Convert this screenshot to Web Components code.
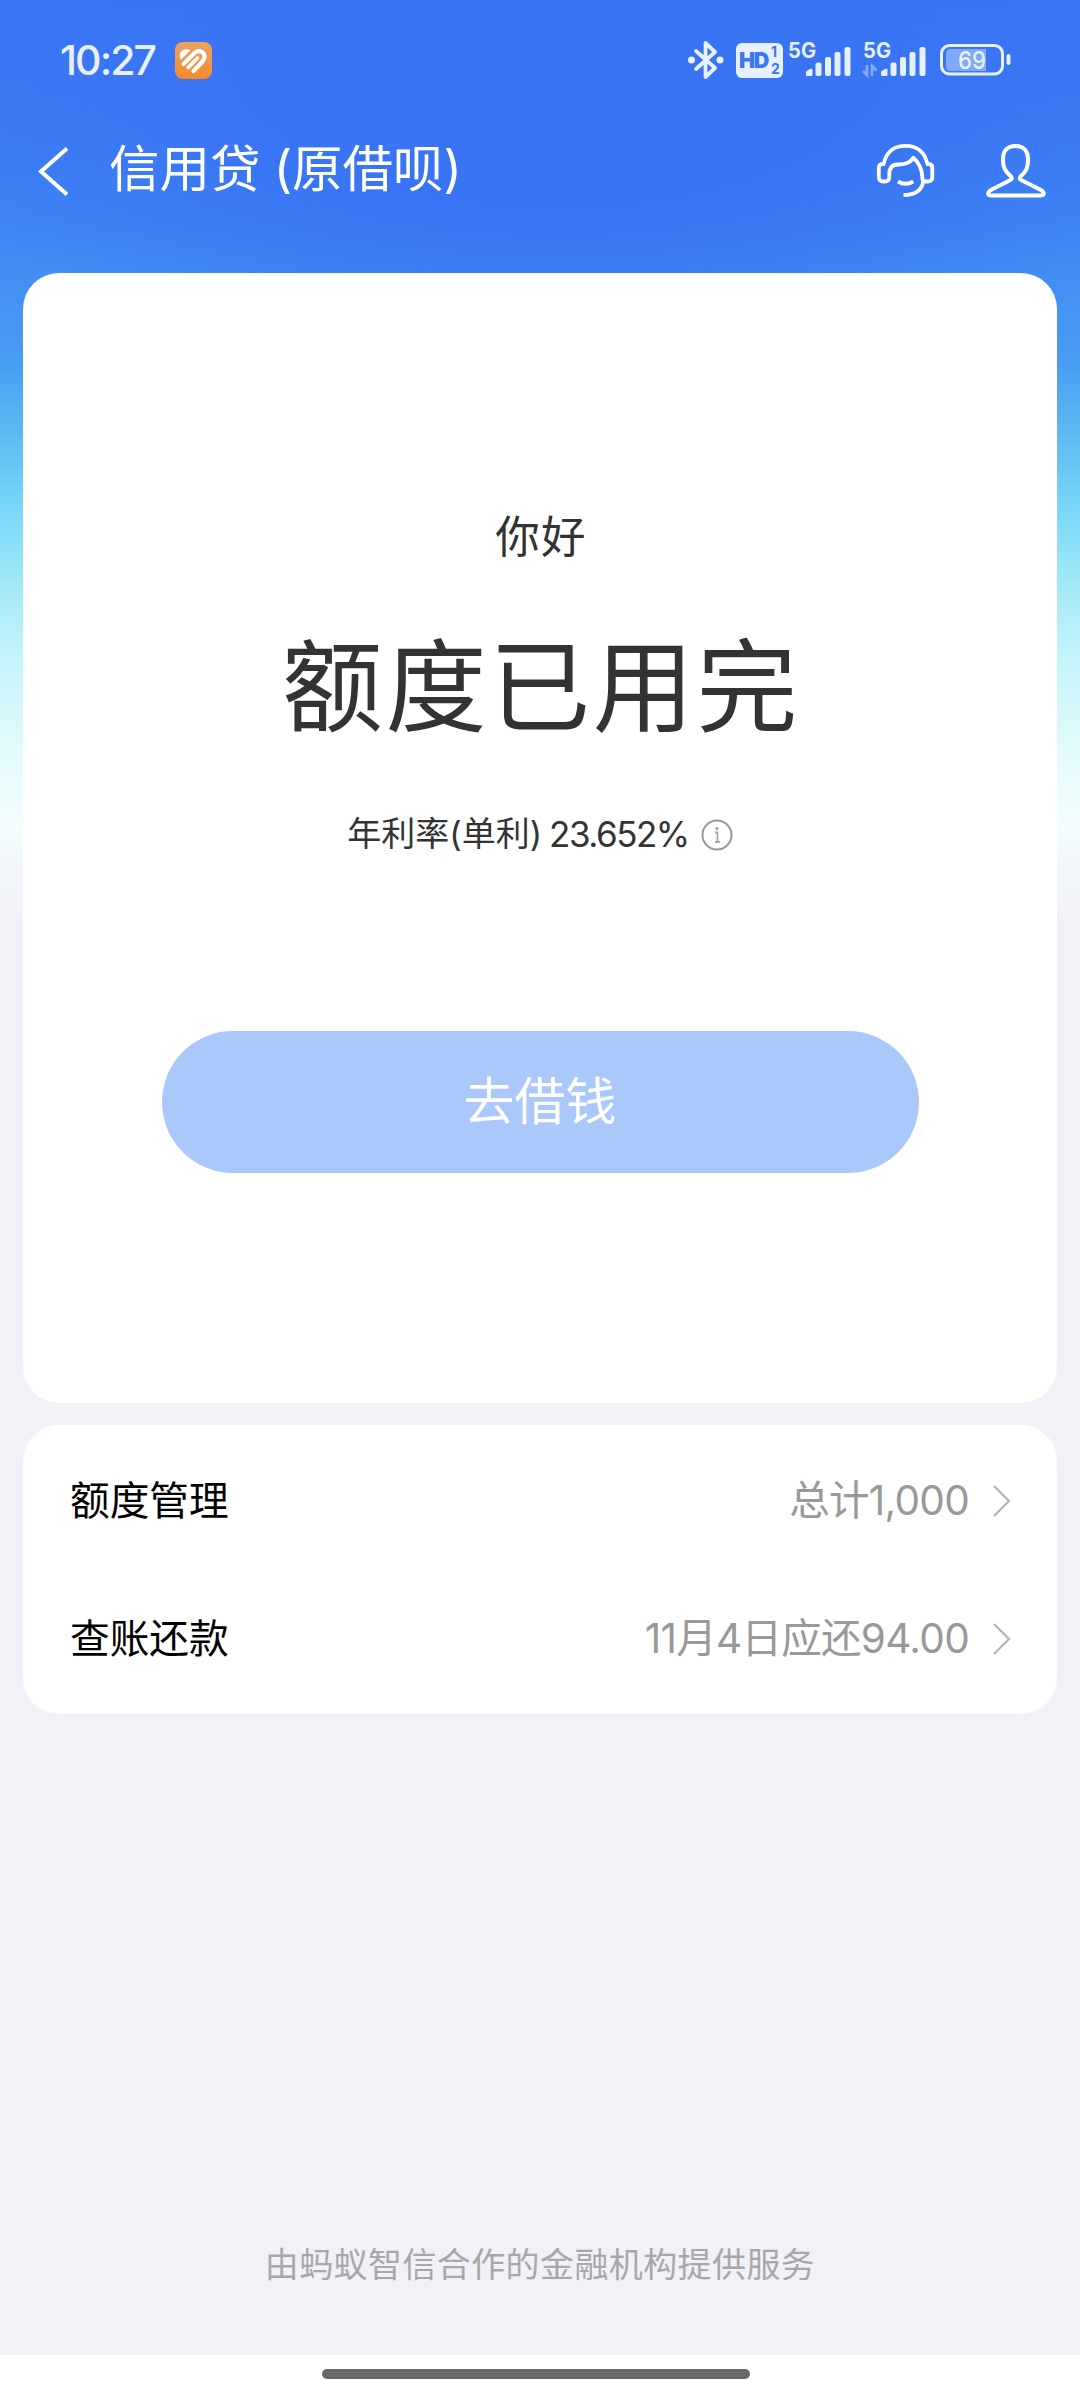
<!DOCTYPE html>
<html lang="zh-CN">
<head>
<meta charset="utf-8">
<title>信用贷</title>
<style>
html,body{margin:0;padding:0}
body{width:1080px;height:2400px;overflow:hidden;background:#f1f2f7;font-family:Inter,"Noto Sans CJK SC",sans-serif}
</style>
</head>
<body>
<loan-page></loan-page>
<script>
const define = (name, html) => {
  const t = document.createElement('template');
  t.innerHTML = html;
  customElements.define(name, class extends HTMLElement {
    constructor() {
      super();
      this.attachShadow({ mode: 'open' }).appendChild(t.content.cloneNode(true));
    }
  });
};

define('app-badge', `<style>:host{display:block;width:37px;height:37px}svg{display:block}</style>
<svg width="37" height="37" viewBox="0 0 37 37"><defs><linearGradient id="g" x1="0" y1="0" x2="0" y2="1"><stop offset="0" stop-color="#e9a362"/><stop offset="1" stop-color="#f58a2c"/></linearGradient></defs>
<rect width="37" height="37" rx="8" fill="url(#g)"/>
<path d="M5.500 17C2.500 9.500 9 5.500 15 8L15.500 8.300L6 17.800Z" fill="#fff"/>
<g fill="none" stroke="#fff" stroke-width="4.200" stroke-linecap="round"><path d="M8.500 22L19.500 11C24 7 30 10 29.500 15.500C29.300 18 27 20.500 18.500 29"/><path d="M13.200 25.500L22.500 16" stroke-width="3.800"/></g></svg>`);

define('bluetooth-icon', `<style>:host{display:block}svg{display:block}</style>
<svg width="36" height="40" viewBox="0 0 36 40" fill="none" stroke="#e6f0fe" stroke-width="3.800" stroke-linejoin="round" stroke-linecap="round"><path d="M8 11L27 28L17.500 37V3L27 12L8 29"/><g fill="#e6f0fe" stroke="none"><circle cx="3.500" cy="20" r="3.500"/><circle cx="32" cy="20" r="3.500"/></g></svg>`);

define('hd-icon', `<style>:host{display:flex;box-sizing:border-box;width:47px;height:35px;border-radius:6px;background:#e6f0fe;color:#3b77f4;align-items:center;padding-left:3px;font-weight:700}
b{font-size:21.500px;line-height:35px;letter-spacing:-1.500px;width:30px}span{display:flex;flex-direction:column;font-size:14px;line-height:17px;margin-left:2px}i{font-style:normal}</style><b>HD</b><span><i>1</i><i>2</i></span>`);

define('signal-icon', `<style>:host{display:block}svg{display:block}text{font:700 21px Inter,sans-serif;fill:#e6f0fe}.a{display:none}:host([data]) .a{display:block}</style>
<svg width="65" height="48" viewBox="0 -6 65 48"><text x="1" y="16" textLength="28" lengthAdjust="spacingAndGlyphs">5G</text>
<g fill="#e6f0fe"><path d="M19 33V30Q19 28.500 24.500 26.500Q25.500 26.500 25.500 28V33Q25.500 34 24.500 34H20Q19 34 19 33Z"/><rect x="28.500" y="20.500" width="6" height="13.500" rx="2"/><rect x="38" y="15" width="6" height="19" rx="2"/><rect x="47.500" y="10" width="6" height="24" rx="2"/><rect x="57.500" y="5" width="6" height="29" rx="2"/></g>
<g class="a" fill="none" stroke="#85acf8" stroke-width="2.600"><path d="M1 29L5 33V23M10 34V24L14.500 28.500"/></g></svg>`);

define('battery-icon', `<style>:host{display:block}svg{display:block}text{font:500 24.500px Inter,sans-serif;fill:#e6f0fe}</style>
<svg width="72" height="32" viewBox="0 0 72 32"><rect x="1.500" y="1.500" width="61" height="28.500" rx="8" fill="none" stroke="#e6f0fe" stroke-width="3"/><path d="M10 5H46V27H10Q6 27 6 22V10Q6 5 10 5Z" fill="#82a9f8"/><rect x="66.500" y="10" width="4" height="11" rx="2" fill="#e6f0fe"/><text x="18" y="24.700" textLength="28" lengthAdjust="spacingAndGlyphs">69</text></svg>`);

define('status-bar', `<style>
:host{display:flex;height:120px;box-sizing:border-box;align-items:center;padding:0 68px 0 60px;color:#e6f0fe}
time{font-size:41px;font-weight:500;line-height:48px;width:115px;letter-spacing:-1.900px}
.right{margin-left:auto;display:flex;align-items:center}
hd-icon{margin-left:12px}signal-icon{margin-left:4px}signal-icon+signal-icon{margin-left:10px}battery-icon{margin-left:13px}
</style><time>10:27</time><app-badge></app-badge><div class="right"><bluetooth-icon></bluetooth-icon><hd-icon></hd-icon><signal-icon></signal-icon><signal-icon data></signal-icon><battery-icon></battery-icon></div>`);

define('nav-header', `<style>
:host{display:flex;height:153px;box-sizing:border-box;padding:21px 34px 0 36px;color:#fff;align-items:flex-start}
svg{display:block}
h1{margin:0 0 0 37px;font-size:50.500px;font-weight:400;line-height:56px;white-space:nowrap;letter-spacing:0;word-spacing:-1px}
.icons{margin-left:auto;display:flex;gap:50px}
</style>
<svg width="36" height="60" viewBox="0 0 36 60" fill="none" stroke="#fff" stroke-width="4"><path d="M31 7.500L5 30.500L31 53.500"/></svg>
<h1><slot></slot></h1>
<div class="icons">
<svg width="60" height="60" viewBox="0 0 60 60" fill="none" stroke="#fff" stroke-width="3.800" stroke-linejoin="round"><path d="M7.700 23C10 11 18 4.800 29.500 4.800S49 11 51.300 23"/><path d="M9 23H6Q2.800 23.500 2.800 27V36Q3 40.500 7.500 40.500H8.500Q13.300 40.500 13.300 36V33C13.300 27 16.500 23.700 22 23.500C30 23.800 34.500 22 37.300 16.700C43.500 22 46 28 46.300 36Q46.300 40.500 49 40.500H51.500Q56.300 40.500 56.300 36V27Q56.300 23.500 53 23H50"/><path d="M47.300 40C46 49 39 54 27.500 54"/><path d="M22 40.500Q29.700 45 37.300 40.500"/></svg>
<svg width="60" height="60" viewBox="0 0 60 60" fill="none" stroke="#fff" stroke-width="4" stroke-linejoin="round"><path d="M29.500 5C21 5 17 10.500 17 18C17 28 20 31 25 35.500Q27 38 23.500 39.500L6 48.500C1 51 1 54.500 5 54.500H54C59 54.500 59 51 54 48.500L36 39.500Q32.500 38 34.500 35.500C39.500 31 42 28 42 18C42 10.500 38 5 29.500 5Z"/></svg>
</div>`);

define('quota-card', `<style>
:host{display:flex;flex-direction:column;align-items:center;box-sizing:border-box;height:1130px;border-radius:36px;background:#fff;color:#333;padding-top:233px}
.hi{font-size:44.500px;line-height:62px;letter-spacing:1.200px;padding-left:2px}
.big{font-size:101px;line-height:130px;margin-top:54px;letter-spacing:2.700px;padding-left:2px}
.rate{display:flex;align-items:center;margin-top:60px;font-size:34px;line-height:44px;white-space:nowrap}
.n{font-size:35px;letter-spacing:-1.500px;margin-left:7px}
svg{display:block;margin:1px 0 0 12px}
button{all:unset;box-sizing:border-box;margin-top:175px;width:757px;height:142px;border-radius:71px;background:#aac8fa;color:#fff;font-size:51px;line-height:142px;text-align:center}
</style>
<div class="hi">你好</div><div class="big">额度已用完</div>
<div class="rate"><span>年利率(单利)</span><span class="n">23.652%</span><svg width="32" height="32" viewBox="0 0 32 32"><circle cx="16" cy="16" r="14.500" fill="none" stroke="#999" stroke-width="2"/><path d="M14 13.500H16.500V23M14 23H19" fill="none" stroke="#aaa" stroke-width="1.800"/><circle cx="16" cy="9.500" r="1.500" fill="#999"/></svg></div>
<button>去借钱</button>`);

define('list-card', `<style>:host{display:flex;flex-direction:column;box-sizing:border-box;height:289px;border-radius:36px;background:#fff;margin-top:22px;padding:7px 46px 0 47px}</style><slot></slot>`);

define('list-row', `<style>
:host{display:flex;height:138px;align-items:center;font-size:39.700px;line-height:56px;color:#000;white-space:nowrap}
.v{margin-left:auto;color:#999;font-size:40.500px;letter-spacing:-.700px}
svg{display:block;margin-left:24px}
</style><span><slot></slot></span><span class="v"><slot name="value"></slot></span><svg width="18" height="34" viewBox="0 0 18 34" fill="none" stroke="#b5b5b5" stroke-width="2.200"><path d="M1 2L16 17L1 32"/></svg>`);

define('gesture-bar', `<style>:host{display:flex;justify-content:center;box-sizing:border-box;height:45px;background:#fff;padding:13.500px 8px 0 0}div{width:428px;height:10.500px;border-radius:6px;background:#686868}</style><div></div>`);

define('loan-page', `<style>
:host{display:flex;flex-direction:column;width:1080px;height:2400px;
background:
radial-gradient(ellipse 680px 320px at 560px 60px,#3974f4 45%,rgba(57,116,244,0) 100%),
linear-gradient(180deg,#3975f4 0,#3c7bf4 100px,#3f85f4 220px,#4490f3 290px,#499df2 365px,#5dbbf1 435px,#83def8 530px,#aeecf8 605px,#ccf6fc 680px,#e2fafc 750px,#f3fdfe 830px,#f1f4f8 875px,#f1f2f7 920px)}
main{padding:0 23px;flex:1;display:flex;flex-direction:column}
footer{margin-top:auto;margin-bottom:66px;text-align:center;color:#a8a8aa;font-size:34px;line-height:48px;letter-spacing:.4px}
</style>
<status-bar></status-bar><nav-header>信用贷 (原借呗)</nav-header>
<main><quota-card></quota-card>
<list-card><list-row>额度管理<span slot="value">总计1,000</span></list-row><list-row>查账还款<span slot="value">11月4日应还94.00</span></list-row></list-card>
<footer>由蚂蚁智信合作的金融机构提供服务</footer></main>
<gesture-bar></gesture-bar>`);
</script>
</body>
</html>
